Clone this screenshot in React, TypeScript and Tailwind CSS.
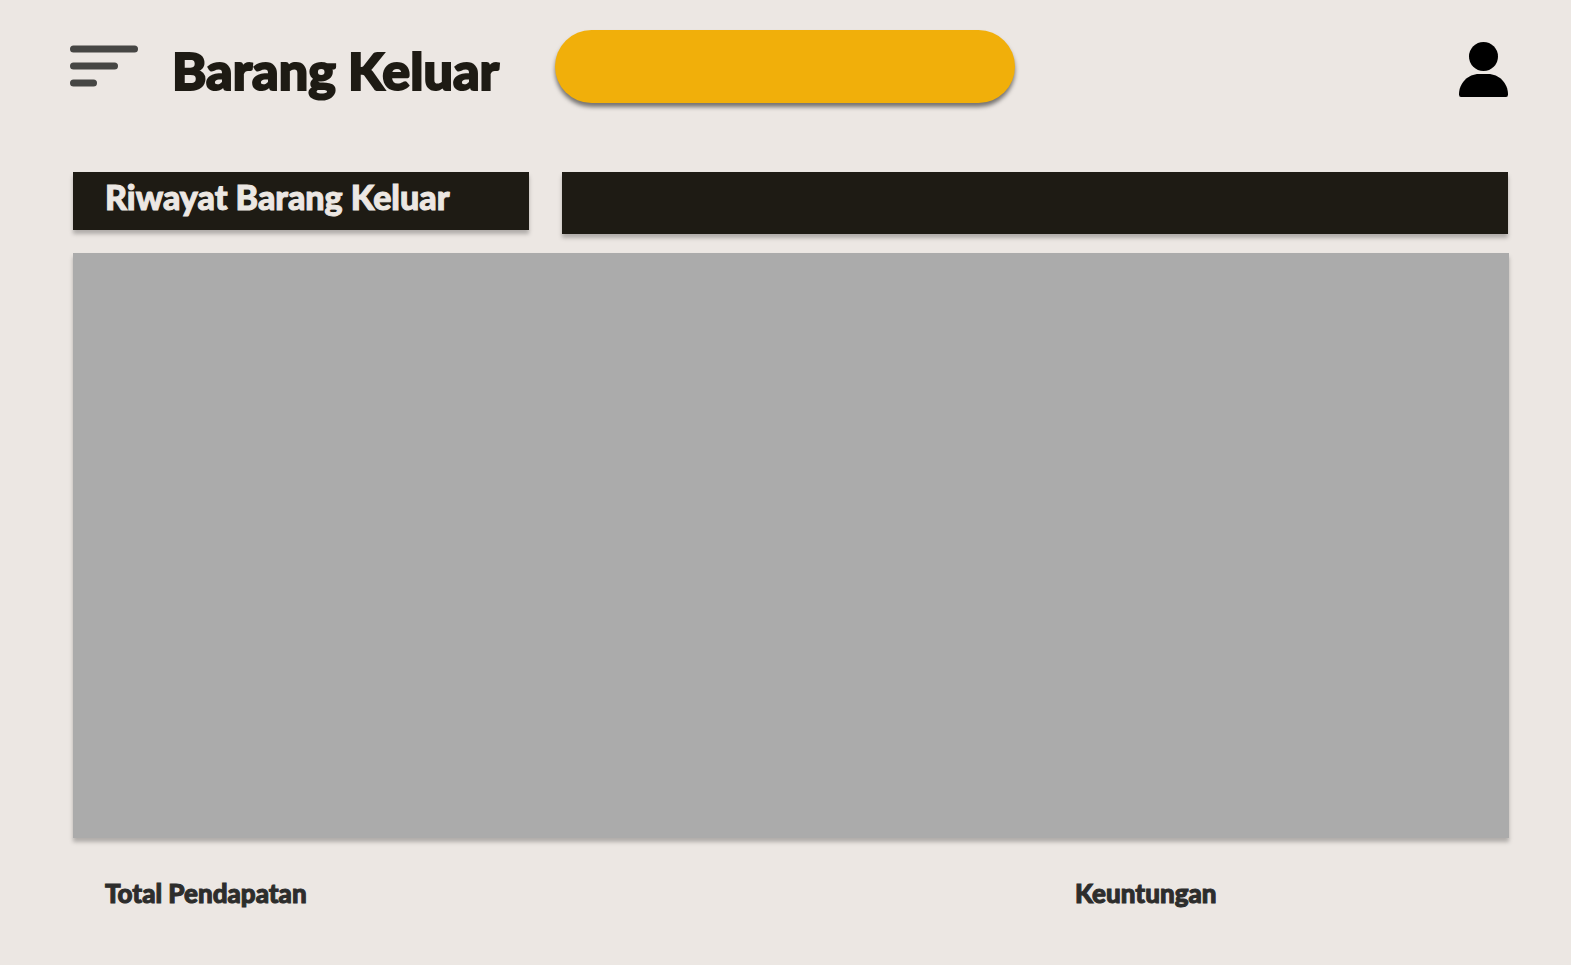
function MenuIcon() {
  return (
    <svg viewBox="0 0 68 42" className="h-[42px] w-[68px]" fill="#464644" aria-hidden="true">
      <rect x="0" y="0.4" width="68" height="7" rx="3.5" />
      <rect x="0" y="17.4" width="48" height="7" rx="3.5" />
      <rect x="0" y="34.5" width="27" height="7" rx="3.5" />
    </svg>
  );
}

function UserIcon() {
  return (
    <svg viewBox="0 0 49 55" className="h-[55px] w-[49px]" fill="#000" aria-hidden="true">
      <circle cx="24.5" cy="14.5" r="14.5" />
      <path d="M20 32H29C40 32 49 41 49 52.5Q49 55 47 55H2Q0 55 0 52.5C0 41 9 32 20 32Z" />
    </svg>
  );
}

export default function App() {
  return (
    <div className="flex min-h-screen flex-col bg-[#ece7e3] font-['Fredoka_One','Lato',sans-serif] font-black text-[#1e1b14]">
      <header className="flex h-[172px] items-start pt-[30px] pr-[63px] pl-[70px]">
        <button type="button" aria-label="Menu" className="mt-[15px] shrink-0">
          <MenuIcon />
        </button>
        <h1 className="mt-[10px] ml-[34px] w-[383px] shrink-0 text-[52px] leading-[60px] whitespace-nowrap [-webkit-text-stroke:2px_#1e1b14]">
          Barang Keluar
        </h1>
        <div className="h-[73px] w-[460px] rounded-full bg-[#f1af0a] shadow-[0_4px_4px_rgba(0,0,0,0.5)]" />
        <button type="button" aria-label="Profil" className="mt-3 ml-auto shrink-0">
          <UserIcon />
        </button>
      </header>

      <main className="flex flex-1 flex-col pr-[62px] pl-[73px]">
        <div className="flex items-start gap-[33px] pr-px">
          <h2 className="h-[58px] w-[456px] shrink-0 bg-[#1e1b14] pt-[3px] pl-8 text-[34px] leading-[44px] whitespace-nowrap text-[#ece7e3] shadow-[0_4px_4px_rgba(0,0,0,0.25)] [-webkit-text-stroke:1px_#ece7e3]">
            Riwayat Barang Keluar
          </h2>
          <div className="h-[62px] flex-1 bg-[#1e1b14] shadow-[0_4px_4px_rgba(0,0,0,0.25)]" />
        </div>
        <section className="mt-[19px] min-h-80 flex-1 bg-[#ababab] shadow-[0_4px_4px_rgba(0,0,0,0.25)]" />
      </main>

      <footer className="flex h-[127px] pt-10 pr-[62px] pl-[105px] text-[26px] leading-[30px] text-[#2d2d2c] [-webkit-text-stroke:1px_#2d2d2c]">
        <p className="flex-1">Total Pendapatan</p>
        <p className="w-[434px]">Keuntungan</p>
      </footer>
    </div>
  );
}
